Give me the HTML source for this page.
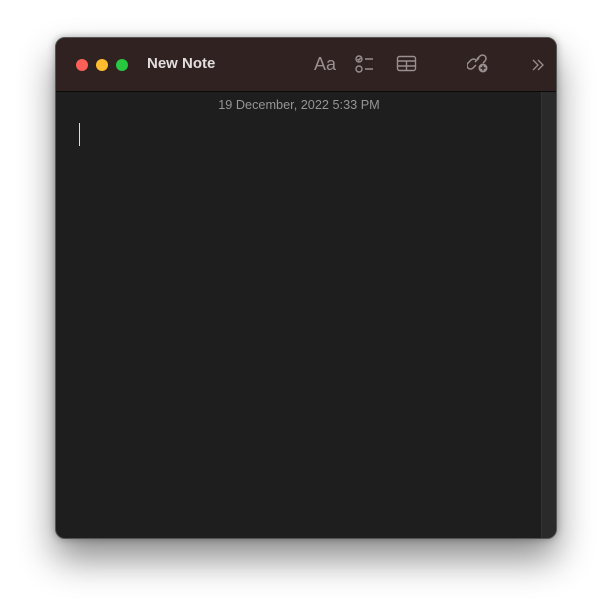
<!DOCTYPE html>
<html><head><meta charset="utf-8"><style>
html,body{margin:0;width:612px;height:612px;background:#fff;overflow:hidden;font-family:"Liberation Sans",sans-serif}
.win{position:absolute;left:55px;top:37px;width:502px;height:502px;border-radius:10px;background:#1e1e1e;border:1px solid #555;box-sizing:border-box;overflow:hidden;box-shadow:0 20px 36px rgba(0,0,0,0.45),0 0 8px rgba(0,0,0,0.3)}
.tb{position:absolute;left:0;top:0;right:0;height:53px;background:#2f2220;border-bottom:1px solid #0b0b0b}
.dot{position:absolute;top:21px;width:12px;height:12px;border-radius:50%}
.title{position:absolute;left:91px;top:17px;font-size:15px;font-weight:bold;color:#e2dede}
.sb{position:absolute;right:0;top:54px;bottom:0;width:14px;background:#2a2a2a;border-left:1px solid #333}
.date{position:absolute;left:0;right:14px;top:60px;text-align:center;font-size:12.7px;color:#959595}
.cur{position:absolute;left:23px;top:85px;width:1px;height:23px;background:#ddd}
svg{position:absolute}
</style></head><body>
<div class="win">
<div class="tb">
<div class="dot" style="left:20px;background:#fe5f57"></div>
<div class="dot" style="left:40px;background:#febc2e"></div>
<div class="dot" style="left:60px;background:#28c840"></div>
<div class="title">New Note</div>
<div style="position:absolute;left:258px;top:16px;font-size:18px;color:#9a9090">Aa</div>
<svg style="left:298px;top:16px" width="22" height="22" viewBox="0 0 22 22" fill="none" stroke="#9a9090" stroke-width="1.4"><circle cx="5" cy="5" r="3"/><path d="M3.5 5l1.2 1.2 2-2.2"/><circle cx="5" cy="15" r="3"/><path d="M11 5h8M11 15h8"/></svg>
<svg style="left:340px;top:17px" width="22" height="18" viewBox="0 0 22 18" fill="none" stroke="#9a9090" stroke-width="1.4"><rect x="1.5" y="1.5" width="18" height="14" rx="2"/><path d="M1.5 6h18M1.5 11h18M10.5 6v9.5"/></svg>
<svg style="left:411px;top:15px" width="24" height="22" viewBox="0 0 24 22" fill="none" stroke="#9a9090" stroke-width="1.5"><path d="M10 6l3-3a3.5 3.5 0 0 1 5 5l-2 2"/><path d="M9 12l-3 3a3.5 3.5 0 0 1-5-5l3-3a3.5 3.5 0 0 1 5 0"/><path d="M8 9l4-4"/><circle cx="16" cy="15" r="4.5" fill="#9a9090" stroke="none"/><path d="M16 12.5v5M13.5 15h5" stroke="#2f2220" stroke-width="1.4"/></svg>
<svg style="left:475px;top:20px" width="14" height="14" viewBox="0 0 14 14" fill="none" stroke="#9a9090" stroke-width="1.3"><path d="M2 2l5 5-5 5M7 2l5 5-5 5"/></svg>
</div>
<div class="sb"></div>
<div class="date">19 December, 2022 5:33 PM</div>
<div class="cur"></div>
</div>
</body></html>
